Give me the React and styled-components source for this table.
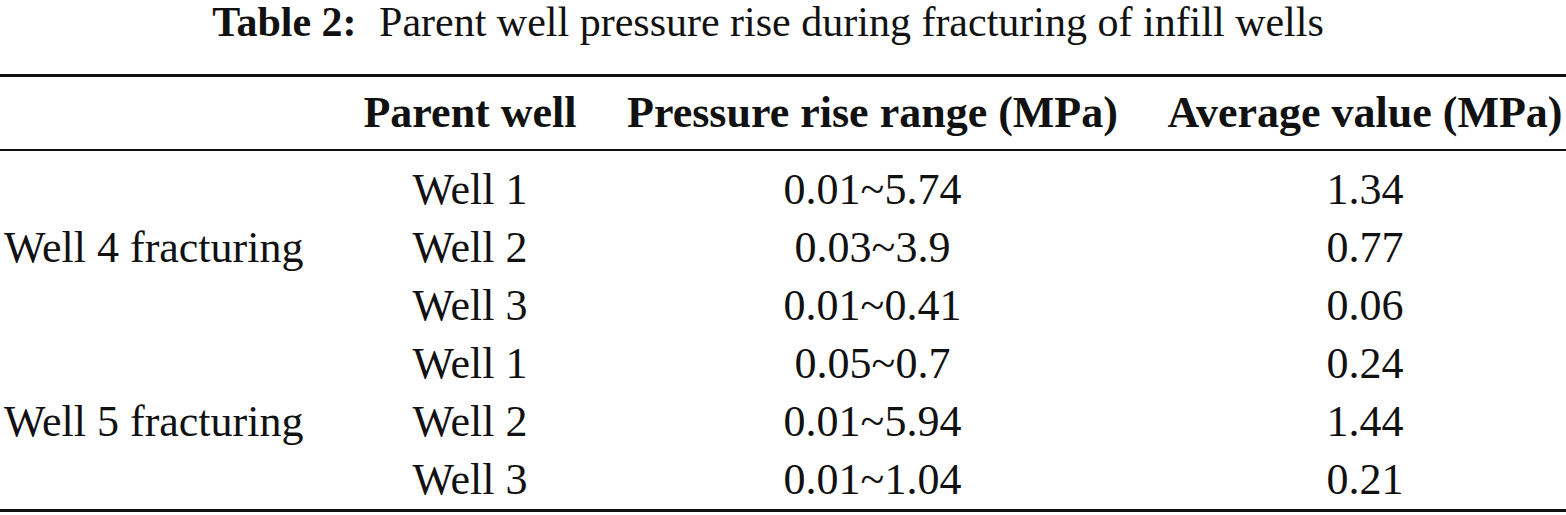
import React from 'react';
import styled, { createGlobalStyle } from 'styled-components';

const GlobalStyle = createGlobalStyle`
  body {
    margin: 0;
    background: #fff;
    color: #111;
    font-family: 'Liberation Serif', 'Times New Roman', serif;
  }
`;

const Wrapper = styled.div`
  width: 1566px;
`;

const Caption = styled.div`
  height: 74px;
  box-sizing: border-box;
  padding: 2px 30px 0 0;
  text-align: center;
  font-size: 42px;
  line-height: 40px;

  b {
    margin-right: 12px;
  }
`;

const Table = styled.table`
  width: 100%;
  border-collapse: collapse;
  table-layout: fixed;
  font-size: 44px;
  line-height: 1;
  border-top: 3px solid #111;
  border-bottom: 3px solid #111;
`;

const HeadCell = styled.th`
  height: 72px;
  padding: 0 0 0 ${({ $pad }) => $pad || 0}px;
  font-weight: bold;
  text-align: ${({ $left }) => ($left ? 'left' : 'center')};
  border-bottom: 2px solid #111;
  white-space: nowrap;
`;

const Cell = styled.td`
  height: 58px;
  padding: 0 0 0 ${({ $pad }) => $pad || 0}px;
  text-align: ${({ $left }) => ($left ? 'left' : 'center')};
  vertical-align: middle;
  white-space: nowrap;
`;

const Row = styled.tr`
  td {
    padding-top: ${({ $first }) => ($first ? '10px' : '0')};
  }
`;

const groups = [
  {
    name: 'Well 4 fracturing',
    rows: [
      ['Well 1', '0.01~5.74', '1.34'],
      ['Well 2', '0.03~3.9', '0.77'],
      ['Well 3', '0.01~0.41', '0.06'],
    ],
  },
  {
    name: 'Well 5 fracturing',
    rows: [
      ['Well 1', '0.05~0.7', '0.24'],
      ['Well 2', '0.01~5.94', '1.44'],
      ['Well 3', '0.01~1.04', '0.21'],
    ],
  },
];

const App = () => (
  <Wrapper>
    <GlobalStyle />
    <Caption>
      <b>Table 2:</b> Parent well pressure rise during fracturing of infill wells
    </Caption>
    <Table>
      <colgroup>
        <col style={{ width: 345 }} />
        <col style={{ width: 250 }} />
        <col style={{ width: 555 }} />
        <col style={{ width: 416 }} />
      </colgroup>
      <thead>
        <tr>
          <HeadCell $left />
          <HeadCell>Parent well</HeadCell>
          <HeadCell>Pressure rise range (MPa)</HeadCell>
          <HeadCell $pad={14}>Average value (MPa)</HeadCell>
        </tr>
      </thead>
      <tbody>
        {groups.map((g, gi) =>
          g.rows.map((r, ri) => (
            <Row key={`${gi}-${ri}`} $first={gi === 0 && ri === 0}>
              {ri === 0 && (
                <Cell $left $pad={4} rowSpan={3}>
                  {g.name}
                </Cell>
              )}
              <Cell>{r[0]}</Cell>
              <Cell>{r[1]}</Cell>
              <Cell $pad={14}>{r[2]}</Cell>
            </Row>
          ))
        )}
      </tbody>
    </Table>
  </Wrapper>
);

export default App;
